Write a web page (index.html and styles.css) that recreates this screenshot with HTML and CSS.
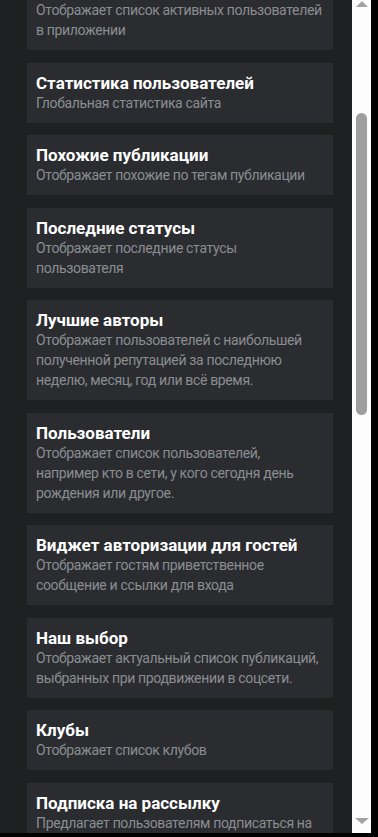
FILE: index.html
```html
<!DOCTYPE html>
<html lang="ru">
<head>
    <meta charset="UTF-8">
    <meta name="viewport" content="width=device-width, initial-scale=1.0">
    <title>Виджеты</title>
    <link rel="stylesheet" href="styles.css">
</head>
<body>
    <div class="window">
        <div class="panel">
            <div class="widget-list">
                <div class="widget">
                    <div class="widget-title">Активные пользователи</div>
                    <div class="widget-desc">Отображает список активных пользователей в приложении</div>
                </div>
                <div class="widget">
                    <div class="widget-title">Статистика пользователей</div>
                    <div class="widget-desc">Глобальная статистика сайта</div>
                </div>
                <div class="widget">
                    <div class="widget-title">Похожие публикации</div>
                    <div class="widget-desc">Отображает похожие по тегам публикации</div>
                </div>
                <div class="widget">
                    <div class="widget-title">Последние статусы</div>
                    <div class="widget-desc">Отображает последние статусы пользователя</div>
                </div>
                <div class="widget">
                    <div class="widget-title">Лучшие авторы</div>
                    <div class="widget-desc">Отображает пользователей с наибольшей полученной репутацией за последнюю неделю, месяц, год или всё время.</div>
                </div>
                <div class="widget">
                    <div class="widget-title">Пользователи</div>
                    <div class="widget-desc">Отображает список пользователей, например кто в сети, у кого сегодня день рождения или другое.</div>
                </div>
                <div class="widget">
                    <div class="widget-title">Виджет авторизации для гостей</div>
                    <div class="widget-desc">Отображает гостям приветственное сообщение и ссылки для входа</div>
                </div>
                <div class="widget">
                    <div class="widget-title">Наш выбор</div>
                    <div class="widget-desc">Отображает актуальный список публикаций, выбранных при продвижении в соцсети.</div>
                </div>
                <div class="widget">
                    <div class="widget-title">Клубы</div>
                    <div class="widget-desc">Отображает список клубов</div>
                </div>
                <div class="widget">
                    <div class="widget-title">Подписка на рассылку</div>
                    <div class="widget-desc">Предлагает пользователям подписаться на рассылку</div>
                </div>
            </div>
        </div>
        <div class="scrollbar">
            <span class="arrow-up"></span>
            <span class="thumb"></span>
            <span class="arrow-down"></span>
        </div>
    </div>
</body>
</html>
```
FILE: styles.css
```css
body {
    margin: 0;
    background-color: #000;
    font-family: Roboto, "Liberation Sans", sans-serif;
    width: 378px;
    height: 837px;
    overflow: hidden;
}
.window {
    display: flex;
    width: 371px;
    height: 833px;
}
.panel {
    flex: 1;
    background-color: #1f2022;
    overflow: hidden;
}
.widget-list {
    display: flex;
    flex-direction: column;
    gap: 12.5px;
    margin: -30px 19px 0 27px;
}
.widget {
    background-color: #2b2c2f;
    padding: 10px 9px;
}
.widget-title {
    color: #fff;
    font-size: 17px;
    font-weight: bold;
    line-height: 20px;
}
.widget-desc {
    color: #8a8d92;
    font-size: 14px;
    letter-spacing: -0.35px;
    line-height: 20px;
}
.scrollbar {
    width: 19px;
    background-color: #fdfdfd;
    display: flex;
    flex-direction: column;
    align-items: center;
    padding: 1px 0 9px;
    box-sizing: border-box;
}
.arrow-up {
    width: 0;
    height: 0;
    border-left: 6px solid transparent;
    border-right: 6px solid transparent;
    border-bottom: 6px solid #a3a3a3;
}
.thumb {
    width: 11px;
    height: 302px;
    margin-top: 106px;
    border-radius: 6px;
    background-color: #9e9e9e;
}
.arrow-down {
    margin-top: auto;
    width: 0;
    height: 0;
    border-left: 7px solid transparent;
    border-right: 7px solid transparent;
    border-top: 6px solid #a3a3a3;
}
```
